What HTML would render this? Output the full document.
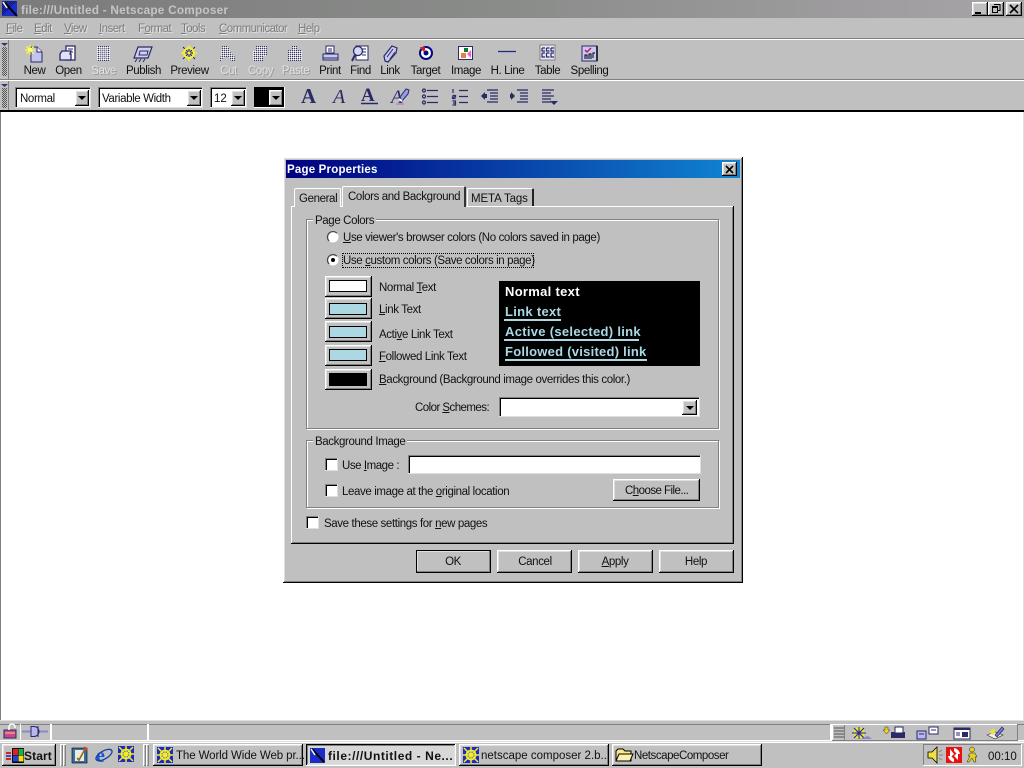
<!DOCTYPE html>
<html><head><meta charset="utf-8"><title>Netscape Composer</title>
<style>
html,body{margin:0;padding:0;background:#c0c0c0;}
#r{position:relative;width:1024px;height:768px;overflow:hidden;background:#c0c0c0;font:12px/14px "Liberation Sans",sans-serif;color:#000;}
#r div{position:absolute;box-sizing:border-box;}
.t{white-space:nowrap;height:14px;margin-top:1px;font-size:11.5px;line-height:14px;letter-spacing:-.38px;color:#111;}
.m{color:#7c7c7c;text-shadow:1px 1px 0 #e4e4e4;font-size:11.5px;letter-spacing:-.55px;}
.l{text-align:center;transform:translateX(-50%);}
.d{color:#e2e2e2;text-shadow:1px 1px 0 #999;}
.b{background:#c0c0c0;box-shadow:inset -1px -1px 0 #000,inset 1px 1px 0 #fff,inset -2px -2px 0 #808080,inset 2px 2px 0 #dfdfdf;}
.p{background:#c0c0c0;box-shadow:inset -1px -1px 0 #fff,inset 1px 1px 0 #000,inset -2px -2px 0 #dfdfdf,inset 2px 2px 0 #808080;}
.s{background:#fff;box-shadow:inset -1px -1px 0 #dfdfdf,inset 1px 1px 0 #808080,inset 2px 2px 0 #000;}
.a:after{content:"";position:absolute;left:50%;top:50%;margin:-2px 0 0 -4px;border:4px solid transparent;border-top:4px solid #000;border-bottom:0;}
.g{border:1px solid #808080;box-shadow:1px 1px 0 #fff,inset 1px 1px 0 #fff;}
.k{background:#fff;box-shadow:inset -1px -1px 0 #dfdfdf,inset 1px 1px 0 #808080,inset 2px 2px 0 #000;width:13px;height:13px;}
.e{height:1px;}
.c{box-shadow:0 0 0 1px #000;}
.v{color:#acd8e4;margin-top:1px;font:bold 13px/16px "Liberation Sans",sans-serif;letter-spacing:.3px;white-space:nowrap;}
</style></head><body><div id="r">

<!-- main title -->
<div style="left:0;top:0;width:1024px;height:18px;background:linear-gradient(90deg,#7b7b7b,#8a8c8a 50%,#a8a4a8)"></div>
<div class="t" style="left:21px;top:2px;color:#c4c4c4;font-weight:bold;font-size:11.8px;letter-spacing:.22px">file:///Untitled - Netscape Composer</div>
<div class="b" style="left:972px;top:2px;width:16px;height:14px"></div>
<div class="b" style="left:988px;top:2px;width:16px;height:14px"></div>
<div class="b" style="left:1006px;top:2px;width:16px;height:14px"></div>

<!-- menu -->
<div class="t m" style="left:6px;top:21px"><u>F</u>ile</div>
<div class="t m" style="left:34px;top:21px"><u>E</u>dit</div>
<div class="t m" style="left:64px;top:21px"><u>V</u>iew</div>
<div class="t m" style="left:99px;top:21px"><u>I</u>nsert</div>
<div class="t m" style="left:138px;top:21px">F<u>o</u>rmat</div>
<div class="t m" style="left:181px;top:21px"><u>T</u>ools</div>
<div class="t m" style="left:219px;top:21px"><u>C</u>ommunicator</div>
<div class="t m" style="left:298px;top:21px"><u>H</u>elp</div>

<!-- toolbars separators -->
<div class="e" style="left:0;top:38px;width:1024px;background:#808080"></div>
<div class="e" style="left:0;top:39px;width:1024px;background:#fff"></div>
<div class="e" style="left:0;top:79px;width:1024px;background:#808080"></div>
<div class="e" style="left:0;top:80px;width:1024px;background:#fff"></div>
<div style="left:8px;top:40px;width:1px;height:39px;background:#808080"></div>
<div style="left:8px;top:81px;width:1px;height:29px;background:#808080"></div>

<!-- toolbar labels -->
<div class="t l" style="left:34.500px;top:63px">New</div>
<div class="t l" style="left:68.500px;top:63px">Open</div>
<div class="t l d" style="left:103.500px;top:63px">Save</div>
<div class="t l" style="left:143.500px;top:63px">Publish</div>
<div class="t l" style="left:189.500px;top:63px">Preview</div>
<div class="t l d" style="left:228.500px;top:63px">Cut</div>
<div class="t l d" style="left:260.500px;top:63px">Copy</div>
<div class="t l d" style="left:295.500px;top:63px">Paste</div>
<div class="t l" style="left:330px;top:63px">Print</div>
<div class="t l" style="left:360.500px;top:63px">Find</div>
<div class="t l" style="left:390px;top:63px">Link</div>
<div class="t l" style="left:425.500px;top:63px">Target</div>
<div class="t l" style="left:466px;top:63px">Image</div>
<div class="t l" style="left:507.500px;top:63px">H. Line</div>
<div class="t l" style="left:547.500px;top:63px">Table</div>
<div class="t l" style="left:589.500px;top:63px">Spelling</div>

<!-- format bar -->
<div class="s" style="left:15px;top:87px;width:76px;height:21px"></div>
<div class="t" style="left:20px;top:91px">Normal</div>
<div class="b a" style="left:75px;top:90px;width:14px;height:16px"></div>
<div class="s" style="left:98px;top:87px;width:105px;height:21px"></div>
<div class="t" style="left:102px;top:91px">Variable Width</div>
<div class="b a" style="left:187px;top:90px;width:14px;height:16px"></div>
<div class="s" style="left:210px;top:87px;width:37px;height:21px"></div>
<div class="t" style="left:214px;top:91px;letter-spacing:0">12</div>
<div class="b a" style="left:231px;top:90px;width:14px;height:16px"></div>
<div style="left:254px;top:87px;width:31px;height:21px;background:#000;box-shadow:inset -1px -1px 0 #fff"></div>
<div class="b a" style="left:269px;top:90px;width:14px;height:16px"></div>

<!-- editor area -->
<div style="left:0;top:110px;width:1024px;height:2px;background:#000"></div>
<div style="left:0;top:112px;width:1024px;height:608px;background:#fff"></div>
<div style="left:0;top:112px;width:1px;height:608px;background:#808080"></div>
<div style="left:1023px;top:112px;width:1px;height:608px;background:#dfdfdf"></div>
<div class="e" style="left:0;top:720px;width:1024px;background:#dfdfdf"></div>

<!-- dialog -->
<div class="b" style="left:283px;top:157px;width:460px;height:426px"></div>
<div style="left:286px;top:160px;width:454px;height:18px;background:linear-gradient(90deg,#000080,#1084d0)"></div>
<div class="t" style="left:287px;top:162px;color:#fff;font-weight:bold;font-size:11.5px;letter-spacing:.2px">Page Properties</div>
<div class="b" style="left:722px;top:162px;width:15px;height:14px"></div>

<!-- tab panel -->
<div style="left:291px;top:206px;width:443px;height:338px;background:#c0c0c0;box-shadow:inset -1px -1px 0 #000,inset 1px 1px 0 #fff,inset -2px -2px 0 #808080"></div>
<div style="left:294px;top:188px;width:47px;height:19px;background:#c0c0c0;border:1px solid #fff;border-bottom:0;border-radius:2px 2px 0 0"></div>
<div style="left:467px;top:188px;width:67px;height:18px;background:#c0c0c0;border-left:1px solid #fff;border-top:1px solid #fff;border-right:2px solid #222;border-radius:2px 2px 0 0"></div>
<div style="left:342px;top:186px;width:124px;height:21px;background:#c0c0c0;border-left:1px solid #fff;border-top:1px solid #fff;border-right:2px solid #333;border-radius:2px 2px 0 0"></div>
<div class="t" style="left:299px;top:191px">General</div>
<div class="t" style="left:348px;top:189px">Colors and Background</div>
<div class="t" style="left:471px;top:191px;letter-spacing:-.1px">META Tags</div>

<!-- page colors -->
<div class="g" style="left:306px;top:219px;width:413px;height:210px"></div>
<div class="t" style="left:313px;top:213px;background:#c0c0c0;padding:0 2px">Page Colors</div>
<div class="t" style="left:343px;top:230px"><u>U</u>se viewer's browser colors (No colors saved in page)</div>
<div class="t" style="left:343px;top:253px">Use <u>c</u>ustom colors (Save colors in page)</div>
<div style="left:342px;top:253px;width:192px;height:15px;border:1px dotted #000"></div>

<div class="b" style="left:325px;top:276px;width:47px;height:21px"></div>
<div class="c" style="left:330px;top:281px;width:36px;height:10px;background:#fff"></div>
<div class="b" style="left:325px;top:298px;width:47px;height:21px"></div>
<div class="c" style="left:330px;top:304px;width:36px;height:10px;background:#acd8e4"></div>
<div class="b" style="left:325px;top:321px;width:47px;height:21px"></div>
<div class="c" style="left:330px;top:327px;width:36px;height:10px;background:#acd8e4"></div>
<div class="b" style="left:325px;top:345px;width:47px;height:21px"></div>
<div class="c" style="left:330px;top:350px;width:36px;height:10px;background:#acd8e4"></div>
<div class="b" style="left:325px;top:369px;width:47px;height:21px"></div>
<div class="c" style="left:330px;top:374px;width:36px;height:11px;background:#000"></div>

<div class="t" style="left:379px;top:280px">Normal <u>T</u>ext</div>
<div class="t" style="left:379px;top:302px"><u>L</u>ink Text</div>
<div class="t" style="left:379px;top:327px">Acti<u>v</u>e Link Text</div>
<div class="t" style="left:379px;top:349px"><u>F</u>ollowed Link Text</div>
<div class="t" style="left:379px;top:372px"><u>B</u>ackground (Background image overrides this color.)</div>

<div style="left:499px;top:281px;width:201px;height:85px;background:#000"></div>
<div class="v" style="left:505px;top:283px;color:#fff">Normal text</div>
<div class="v" style="left:505px;top:303px">Link text</div>
<div class="v" style="left:505px;top:323px">Active (selected) link</div>
<div class="v" style="left:505px;top:343px;letter-spacing:.25px">Followed (visited) link</div>
<div style="left:504px;top:319px;width:57px;height:2px;background:#acd8e4"></div>
<div style="left:504px;top:339px;width:135px;height:2px;background:#acd8e4"></div>
<div style="left:505px;top:359px;width:142px;height:2px;background:#acd8e4"></div>

<div class="t" style="left:415px;top:400px;letter-spacing:-.55px">Color <u>S</u>chemes:</div>
<div class="s" style="left:499px;top:397px;width:201px;height:20px"></div>
<div class="b a" style="left:682px;top:400px;width:15px;height:15px"></div>

<!-- background image -->
<div class="g" style="left:306px;top:440px;width:413px;height:68px"></div>
<div class="t" style="left:313px;top:434px;background:#c0c0c0;padding:0 2px">Background Image</div>
<div class="k" style="left:325px;top:458px"></div>
<div class="t" style="left:342px;top:458px;letter-spacing:-.45px">Use <u>I</u>mage :</div>
<div class="s" style="left:408px;top:455px;width:293px;height:19px"></div>
<div class="k" style="left:325px;top:484px"></div>
<div class="t" style="left:342px;top:484px">Leave image at the <u>o</u>riginal location</div>
<div class="b" style="left:613px;top:479px;width:87px;height:22px"></div>
<div class="t" style="left:625px;top:483px;letter-spacing:-.55px">C<u>h</u>oose File...</div>

<div class="k" style="left:306px;top:516px"></div>
<div class="t" style="left:324px;top:516px">Save these settings for <u>n</u>ew pages</div>

<!-- dialog buttons -->
<div class="b" style="left:416px;top:550px;width:75px;height:23px;outline:1px solid #000;outline-offset:-1px"></div>
<div class="b" style="left:497px;top:550px;width:75px;height:23px"></div>
<div class="b" style="left:578px;top:550px;width:75px;height:23px"></div>
<div class="b" style="left:659px;top:550px;width:75px;height:23px"></div>
<div class="t l" style="left:453px;top:554px">OK</div>
<div class="t l" style="left:535px;top:554px">Cancel</div>
<div class="t l" style="left:615px;top:554px"><u>A</u>pply</div>
<div class="t l" style="left:696px;top:554px">Help</div>

<!-- status bar -->
<div class="e" style="left:0;top:724px;width:1024px;background:#808080"></div>
<div class="e" style="left:0;top:740px;width:1024px;background:#fff"></div>
<div style="left:20px;top:724px;width:1px;height:17px;background:#fff"></div>
<div style="left:50px;top:724px;width:2px;height:17px;background:#fff"></div>
<div style="left:147px;top:724px;width:2px;height:17px;background:#fff"></div>
<div style="left:830px;top:724px;width:2px;height:17px;background:#fff"></div>
<div style="left:832px;top:724px;width:186px;height:17px;box-shadow:inset -1px -1px 0 #808080,inset 1px 1px 0 #fff"></div>
<div style="left:844px;top:725px;width:1px;height:15px;background:#808080"></div>

<!-- taskbar -->
<div class="e" style="left:0;top:741px;width:1024px;background:#dfdfdf"></div>
<div class="e" style="left:0;top:742px;width:1024px;background:#fff"></div>
<div class="b" style="left:2px;top:744px;width:54px;height:22px"></div>
<div class="t" style="left:24px;top:748px;font-weight:bold;font-size:12px;letter-spacing:.1px">Start</div>
<div style="left:60px;top:744px;width:3px;height:22px;box-shadow:inset 1px 1px 0 #fff,inset -1px -1px 0 #808080"></div>
<div style="left:63px;top:744px;width:3px;height:22px;box-shadow:inset 1px 1px 0 #fff,inset -1px -1px 0 #808080"></div>
<div style="left:143px;top:744px;width:3px;height:22px;box-shadow:inset 1px 1px 0 #fff,inset -1px -1px 0 #808080"></div>
<div style="left:146px;top:744px;width:3px;height:22px;box-shadow:inset 1px 1px 0 #fff,inset -1px -1px 0 #808080"></div>
<div class="b" style="left:153px;top:744px;width:150px;height:22px"></div>
<div class="p" style="left:306px;top:744px;width:150px;height:22px;background:#d8d8d8"></div>
<div class="b" style="left:459px;top:744px;width:150px;height:22px"></div>
<div class="b" style="left:612px;top:744px;width:150px;height:22px"></div>
<div class="t" style="left:176px;top:748px;letter-spacing:-.1px">The World Wide Web pr...</div>
<div class="t" style="left:328px;top:748px;font-weight:bold;font-size:12px;letter-spacing:.55px">file:///Untitled - Ne...</div>
<div class="t" style="left:481px;top:748px;letter-spacing:0">netscape composer 2.b...</div>
<div class="t" style="left:634px;top:748px;letter-spacing:-.45px">NetscapeComposer</div>
<div style="left:923px;top:744px;width:99px;height:22px;box-shadow:inset -1px -1px 0 #fff,inset 1px 1px 0 #808080"></div>
<div class="t" style="left:988px;top:749px;letter-spacing:0">00:10</div>

<!-- icons -->
<svg width="1024" height="768" viewBox="0 0 1024 768" style="position:absolute;left:0;top:0">
<defs>
<pattern id="dots" width="2" height="2" patternUnits="userSpaceOnUse"><rect width="1" height="1" fill="#000"/><rect x="1" y="1" width="1" height="1" fill="#000"/></pattern>
<pattern id="dis" width="2" height="2" patternUnits="userSpaceOnUse"><rect width="1" height="1" fill="#33337a"/><rect x="1" y="1" width="1" height="1" fill="#fff"/></pattern>
<g id="wheel"><rect width="16" height="16" fill="#1a2cc0"/><path d="M8 0v16M0 8h16M1 1l14 14M15 1L1 15" stroke="#f4ec30" stroke-width="1.500"/><circle cx="8" cy="8" r="4.500" fill="none" stroke="#f4ec30" stroke-width="1.800"/></g>
</defs>

<!-- app icon -->
<rect x="2" y="1" width="15" height="15" fill="#1c2cc8"/><path d="M2 1h15L2 16z" fill="url(#dots)" opacity=".5"/><path d="M5 3l12 13" stroke="#000" stroke-width="2"/><path d="M3 2l4 6" stroke="#fff" stroke-width="1.5"/>

<!-- window buttons -->
<path d="M975 12h6v2h-6z" fill="#000"/>
<path d="M994 4.500h6v6h-2M992.500 6.500h5v6h-5z" fill="none" stroke="#000"/><path d="M992 6h6v2h-6zM994 4h6v1h-6z" fill="#000"/>
<path d="M1010 5l8 8M1018 5l-8 8" stroke="#000" stroke-width="1.600"/>
<path d="M726 166l7 7M733 166l-7 7" stroke="#000" stroke-width="1.600"/>

<!-- grips -->
<path d="M1 43h7l-3.500 3z" fill="#33337a"/><path d="M1 84h7l-3.500 3z" fill="#33337a"/>
<rect x="2" y="47" width="5" height="29" fill="url(#dots)" opacity=".55"/>
<rect x="2" y="88" width="5" height="20" fill="url(#dots)" opacity=".55"/>

<!-- New -->
<path d="M31 47h6l5 5v10H31z" fill="#c4c4f0" stroke="#2a2a66"/><path d="M37 47v5h5" fill="#fff" stroke="#2a2a66"/>
<path d="M25 50h10M30 45v10M26.500 46.500l7 7M33.500 46.500l-7 7" stroke="#ffff30" stroke-width="1.300"/><rect x="28" y="48" width="4" height="3" fill="#ffff80"/>
<!-- Open -->
<path d="M66 46h9v14H66z" fill="#fff" stroke="#2a2a66" stroke-width="1.300"/><path d="M68 49h5M68 52h5" stroke="#2a2a66"/>
<path d="M60 54l2-3h9l-1 3h1v6H60z" fill="#e0e0f8" stroke="#2a2a66" stroke-width="1.300"/>
<!-- Save disabled -->
<rect x="97" y="46" width="13" height="15" fill="url(#dis)"/><rect x="100" y="48" width="7" height="11" fill="#bbc" opacity=".5"/>
<!-- Publish -->
<path d="M138 47h14l-4 11h-14z" fill="#d0d0f0" stroke="#2a2a66" stroke-width="1.200"/><path d="M140 51h8l-1 4h-8z" fill="none" stroke="#2a2a66"/><path d="M137 59l-2 3M141 59l-2 3M145 59l-2 3" stroke="#2a2a66"/>
<!-- Preview -->
<path d="M189 45v16M181 53h16M183 47l12 12M195 47l-12 12" stroke="#1f1f5c" stroke-width="1"/><circle cx="189" cy="53" r="5" fill="none" stroke="#f8f020" stroke-width="2"/><circle cx="189" cy="53" r="1.500" fill="#f8f020"/><path d="M189 45v3M189 58v3M181 53h3M194 53h3" stroke="#f8f020" stroke-width="1.300"/>
<!-- Cut Copy Paste disabled -->
<path d="M222 46h6l3 7 4 4v4h-4l-3-4h-4l-3 4h-2l2-6z" fill="url(#dis)"/>
<path d="M256 46h11v10h-11z M253 51h10v10h-10z" fill="url(#dis)"/>
<path d="M288 50h4v-4h5v4h5v11h-14z" fill="url(#dis)"/>
<!-- Print -->
<path d="M326 46h8v7h-8z" fill="#fff" stroke="#2a2a66"/><path d="M328 49h4M328 51h4" stroke="#2a2a66"/><path d="M323 54h15v6h-15z" fill="#c8c8f0" stroke="#2a2a66"/><path d="M323 58h15" stroke="#2a2a66"/>
<!-- Find -->
<path d="M356 46h12v14h-12z" fill="#fff" stroke="#2a2a66"/><path d="M362 49h4M362 52h4M362 55h4" stroke="#2a2a66"/><circle cx="358" cy="51" r="4.500" fill="#d8d8f8" stroke="#2a2a66" stroke-width="1.300"/><path d="M355 55l-3 6" stroke="#2a2a66" stroke-width="2"/>
<!-- Link -->
<path d="M385 61l-1-5 8-10 5 2-1 5-8 9z" fill="#c8c8f0" stroke="#2a2a66" stroke-width="1.200"/><path d="M387 57l6-8M390 59l5-7" stroke="#2a2a66"/>
<!-- Target -->
<circle cx="426" cy="53" r="6" fill="#fff" stroke="#000a80" stroke-width="2"/><circle cx="426" cy="53" r="2.500" fill="#000a80"/><path d="M420 47h5v3l-1 2-3-3z" fill="#e81818"/>
<!-- Image -->
<rect x="458.500" y="46.500" width="14" height="13" fill="#fff" stroke="#2a2a66"/><rect x="464" y="48" width="4" height="4" fill="#0c7a30"/><rect x="461" y="53" width="5" height="5" fill="#e88040"/><path d="M471 50v8l-4-4z" fill="#f060c8"/>
<!-- H line -->
<path d="M498 51.500h18" stroke="#2a2a66" stroke-width="1.300"/><path d="M498 53.500h18" stroke="#b8b8e8"/>
<!-- Table -->
<rect x="540" y="45" width="15" height="15" fill="#e8e8f8"/><path d="M542 48v3h3M546.500 48v3h3M551 48v3h3M542 53v4h3M546.500 53v4h3M551 53v4h3M542 48h3M546.500 48h3M551 48h3M542 53h3M546.500 53h3M551 53h3" stroke="#2a2a66" fill="none" stroke-width="1.200"/><rect x="540" y="45" width="15" height="15" fill="none" stroke="#808080"/>
<!-- Spelling -->
<rect x="582" y="46" width="15" height="15" fill="#c8c8f0" stroke="#2a2a66"/><path d="M585 50l2 2 4-4" stroke="#c01860" fill="none" stroke-width="1.500"/><path d="M585 59v-4h2v4M589 59v-5h2v5M593 58v-5h2" stroke="#000" fill="none"/><path d="M597 46v15" stroke="#000" stroke-width="1.500"/>

<!-- format A's -->
<g fill="#2a2a66" font-family="Liberation Serif,serif">
<text x="301" y="103" font-size="21" font-weight="bold">A</text>
<text x="333" y="103" font-size="20" font-style="italic">A</text>
<text x="361" y="101" font-size="19" font-weight="bold">A</text>
</g>
<path d="M361 103.500h17" stroke="#2a2a66" stroke-width="1.400"/>
<!-- Pen -->
<text x="391" y="103" font-size="19" font-family="Liberation Serif,serif" font-style="italic" fill="#2a2a66">A</text>
<path d="M400 97l6-8 3 1-1 4-6 7z" fill="#9898e8" stroke="#2a2a66"/><path d="M399 99l3 2" stroke="#fff" stroke-width="2"/><path d="M396 104h8" stroke="#b070b0"/>
<!-- lists -->
<g stroke="#2a2a66" stroke-width="1.200" fill="none">
<path d="M427 90.500h11M427 96.500h11M427 102.500h11"/><circle cx="424" cy="90.500" r="1.500"/><circle cx="424" cy="96.500" r="1.500"/><circle cx="424" cy="102.500" r="1.500"/>
<path d="M459 90.500h9M459 96.500h9M459 102.500h9"/><path d="M453 89v4M452.500 95.500h3v1.500h-3v1.500h3M452.500 101h3v4h-3M453 103h2"/>
<path d="M487 90h11M490 93h8M490 96h8M490 99h8M487 102h11"/>
<path d="M517 90h11M520 93h8M520 96h8M520 99h8M517 102h11"/>
<path d="M542 90h12M542 93h9M542 96h12M542 99h9M542 102h9"/>
</g>
<path d="M481 96l4-4v8zM511 92l4 4-4 4zM550 101h8l-4 4z" fill="#2a2a66"/>
<path d="M510 94h3v4h-3zM484 94h3v4h-3z" fill="#2a2a66"/>

<!-- radios -->
<circle cx="333" cy="237" r="5.500" fill="#fff"/><path d="M329.100 241a5.500 5.500 0 0 1 7.800-7.800" fill="none" stroke="#444" stroke-width="1.200"/>
<circle cx="333" cy="260" r="5.500" fill="#fff"/><path d="M329.100 264a5.500 5.500 0 0 1 7.800-7.800" fill="none" stroke="#444" stroke-width="1.200"/><circle cx="333" cy="260" r="2" fill="#000"/>

<!-- status icons -->
<path d="M4 730h12v8H4z" fill="#c84890" stroke="#2a2a66"/><path d="M9 730v-3a3 3 0 0 1 6 0v1" fill="none" stroke="#fff" stroke-width="1.500"/><path d="M5 733h10" stroke="#ffd060"/>
<path d="M22 731.500h26" stroke="#8888cc" stroke-width="2"/><path d="M31 726.500h3a5 5 0 0 1 0 10h-3z" fill="#b8b8ee" stroke="#2a2a66"/><path d="M38 726v11" stroke="#2a2a66"/>
<!-- component bar -->
<path d="M834 728h10M834 731h10M834 734h10M834 737h10" stroke="#555"/>
<g transform="translate(852 727)"><circle cx="7" cy="6" r="4.500" fill="none" stroke="#f0e830" stroke-width="2"/><path d="M7 0v12M0 6h14M2 1l10 10M12 1L2 11" stroke="#2a2a66"/><path d="M8 12h12l-4-3z" fill="#8888cc"/></g>
<g transform="translate(884 726)"><path d="M1 1h3v3h2l-3.500 4L-1 4h2z" fill="#f0d020" stroke="#333" stroke-width=".5"/><rect x="7" y="6" width="14" height="6" fill="#2a2a66"/><rect x="11" y="1" width="8" height="6" fill="#fff" stroke="#2a2a66"/></g>
<g transform="translate(917 727)"><rect x="0" y="4" width="9" height="8" fill="#b8b8f0" stroke="#2a2a66"/><rect x="12" y="0" width="9" height="7" fill="#fff" stroke="#2a2a66"/><path d="M2 7h5M14 3h5" stroke="#2a2a66"/></g>
<g transform="translate(954 727)"><rect x="0" y="1" width="16" height="11" fill="#fff" stroke="#2a2a66"/><path d="M0 1h16v2H0z" fill="#2a2a66"/><rect x="8" y="5" width="6" height="5" fill="#2a2a66"/><path d="M2 6h4M2 8h4" stroke="#2a2a66"/></g>
<g transform="translate(987 726)"><path d="M0 9l8 4 8-4-8-3z" fill="#f0f0f0" stroke="#333" stroke-width=".6"/><path d="M8 9l7-8 2 2-7 8z" fill="#7878d0" stroke="#2a2a66" stroke-width=".7"/><path d="M2 6l4 3 3-5-3-1z" fill="#f0e030"/></g>

<!-- Start logo -->
<g transform="translate(6 747)"><path d="M0 5h5v2H0z" fill="#e02020"/><path d="M0 8h5v2H0z" fill="#3050d0"/><path d="M0 11h5v2H0z" fill="#e02020"/><rect x="6" y="1" width="12" height="15" fill="#000" rx="1"/><path d="M7 2h5v6H7z" fill="#e02020"/><path d="M12.500 2h5v6h-5z" fill="#20b040"/><path d="M7 8.500h5v6H7z" fill="#2040e0"/><path d="M12.500 8.500h5v6h-5z" fill="#f0e020"/></g>
<!-- quick launch -->
<g transform="translate(72 746)"><rect x="0" y="2" width="15" height="15" fill="#3a6ea5" stroke="#000" stroke-width=".6"/><path d="M3 4h9v11H3z" fill="#f0ecd8"/><path d="M5 12l2 2 6-11" stroke="#8a6a20" stroke-width="1.600" fill="none"/><path d="M12 1l3 3" stroke="#e04020" stroke-width="2"/></g>
<g transform="translate(96 746)"><text x="0" y="16" font-family="Liberation Serif,serif" font-size="20" font-weight="bold" fill="#1858d8">e</text><ellipse cx="8" cy="9" rx="9" ry="4" fill="none" stroke="#1840a0" stroke-width="1.300" transform="rotate(-30 8 9)"/></g>
<use href="#wheel" transform="translate(118 746)"/>
<!-- task icons -->
<use href="#wheel" transform="translate(157 747)"/>
<g transform="translate(310 748)"><rect width="15" height="15" fill="#1c2cc8"/><path d="M2 1l12 13" stroke="#000" stroke-width="2"/><path d="M1 1l4 6" stroke="#fff" stroke-width="1.5"/></g>
<use href="#wheel" transform="translate(463 747)"/>
<g transform="translate(616 747)"><path d="M0 14V4l2-2h5l2 2h6v10z" fill="#f8e890" stroke="#000"/><path d="M0 14l3-7h14l-3 7z" fill="#fff0b0" stroke="#000"/></g>
<!-- tray -->
<g transform="translate(928 747)"><path d="M0 5h4l5-5v16l-5-5H0z" fill="#f0e040" stroke="#000" stroke-width=".8"/><path d="M11 5l3-2M11 8h4M11 11l3 2" stroke="#808080"/></g>
<rect x="946" y="747" width="16" height="16" fill="#e81010"/><path d="M954 748a7 7 0 0 1 6 6h-3l-3-3zM954 762a7 7 0 0 1-6-6h3l3 3z" fill="#fff"/><path d="M950 749l4 5-4 4zM958 752v8l-4-4z" fill="#fff"/>
<g transform="translate(965 747)" fill="#e8d020" stroke="#222" stroke-width=".5"><circle cx="7" cy="2.500" r="2.500"/><path d="M5 6h5l2 4-2 0 1 5h-2l-2-4-3 4H2l3-6-2 0z"/></g>
</svg>
</div></body></html>
